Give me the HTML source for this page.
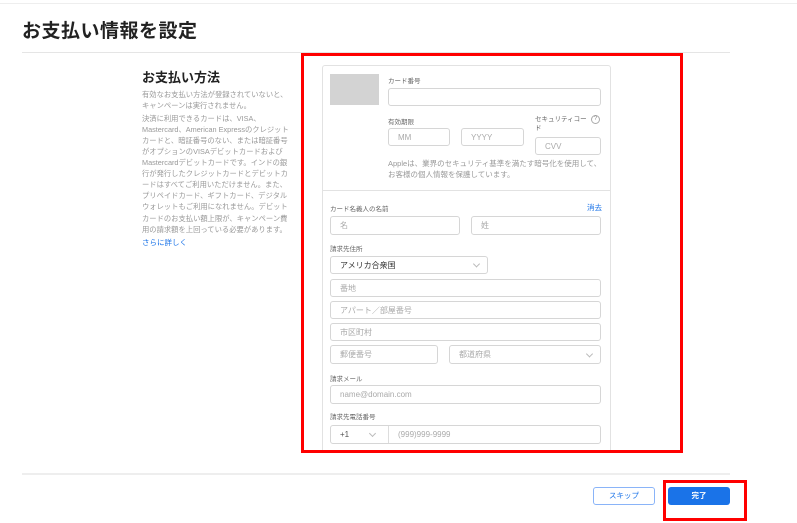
<!DOCTYPE html>
<html><head><meta charset="utf-8"><style>
*{margin:0;padding:0;box-sizing:border-box}
body{width:797px;height:523px;background:#fff;position:relative;overflow:hidden;font-family:"Liberation Sans","Noto Sans CJK JP",sans-serif;color:#333}
.a{position:absolute}
.lbl{position:absolute;font-size:6.5px;color:#666}
.in{position:absolute;border:1px solid #d6d6d6;border-radius:3px;font-size:8px;color:#aaa;padding-left:9px;display:flex;align-items:center;background:#fff}
.chev{position:absolute;right:8px;top:50%;width:5px;height:5px;border-right:1px solid #bbb;border-bottom:1px solid #bbb;transform:translateY(-70%) rotate(45deg)}
.t{white-space:nowrap}
</style></head><body>
<div class="a" style="left:0;top:3px;width:797px;height:1px;background:#eee"></div>
<div class="a" style="left:22px;top:16px;font-size:19px;font-weight:bold;color:#222;letter-spacing:0.5px">お支払い情報を設定</div>
<div class="a" style="left:22px;top:52px;width:708px;height:1px;background:#e5e5e5"></div>

<div class="a" style="left:142px;top:67px;font-size:13px;font-weight:bold;color:#222">お支払い方法</div>
<div class="a t" style="left:142px;top:89px;font-size:7.3px;line-height:11.1px;color:#999">有効なお支払い方法が登録されていないと、<br>キャンペーンは実行されません。<div style="height:1.5px"></div>決済に利用できるカードは、VISA、<br>Mastercard、American Expressのクレジット<br>カードと、暗証番号のない、または暗証番号<br>がオプションのVISAデビットカードおよび<br>Mastercardデビットカードです。インドの銀<br>行が発行したクレジットカードとデビットカ<br>ードはすべてご利用いただけません。また、<br>プリペイドカード、ギフトカード、デジタル<br>ウォレットもご利用になれません。デビット<br>カードのお支払い額上限が、キャンペーン費<br>用の請求額を上回っている必要があります。</div>
<div class="a" style="left:142px;top:237px;font-size:7.5px;color:#1a73e8">さらに詳しく</div>

<div class="a" style="left:322px;top:65px;width:289px;height:386px;border:1px solid #e2e2e2;border-bottom:none;border-radius:3px 3px 0 0"></div>
<div class="a" style="left:301px;top:53px;width:382px;height:400px;border:3px solid #f00"></div>
<div class="a" style="left:322px;top:190px;width:289px;height:1px;background:#e2e2e2"></div>
<div class="a" style="left:330px;top:74px;width:49px;height:31px;background:#d3d3d3"></div>
<div class="lbl" style="left:388px;top:75px">カード番号</div>
<div class="in" style="left:388px;top:88px;width:213px;height:18px"></div>
<div class="lbl" style="left:388px;top:116px">有効期限</div>
<div class="in" style="left:388px;top:128px;width:62px;height:18px">MM</div>
<div class="in" style="left:461px;top:128px;width:63px;height:18px">YYYY</div>
<div class="lbl" style="left:535px;top:115px;line-height:9px;width:55px">セキュリティコード</div>
<div class="a" style="left:591px;top:115px;width:9px;height:9px;border:1px solid #aaa;border-radius:50%;font-size:6px;color:#888;text-align:center;line-height:7px">?</div>
<div class="in" style="left:535px;top:137px;width:66px;height:18px">CVV</div>
<div class="a t" style="left:388px;top:158px;font-size:7.5px;line-height:11px;color:#999">Appleは、業界のセキュリティ基準を満たす暗号化を使用して、<br>お客様の個人情報を保護しています。</div>

<div class="lbl" style="left:330px;top:203px">カード名義人の名前</div>
<div class="a" style="left:587px;top:202px;font-size:7.5px;color:#1a73e8">消去</div>
<div class="in" style="left:330px;top:216px;width:130px;height:19px">名</div>
<div class="in" style="left:471px;top:216px;width:130px;height:19px">姓</div>
<div class="lbl" style="left:330px;top:243px">請求先住所</div>
<div class="in" style="left:330px;top:256px;width:158px;height:18px;color:#333">アメリカ合衆国<span class="chev"></span></div>
<div class="in" style="left:330px;top:279px;width:271px;height:18px">番地</div>
<div class="in" style="left:330px;top:301px;width:271px;height:18px">アパート／部屋番号</div>
<div class="in" style="left:330px;top:323px;width:271px;height:18px">市区町村</div>
<div class="in" style="left:330px;top:345px;width:108px;height:19px">郵便番号</div>
<div class="in" style="left:449px;top:345px;width:152px;height:19px">都道府県<span class="chev"></span></div>
<div class="lbl" style="left:330px;top:373px">請求メール</div>
<div class="in" style="left:330px;top:385px;width:271px;height:19px">name@domain.com</div>
<div class="lbl" style="left:330px;top:411px">請求先電話番号</div>
<div class="in" style="left:330px;top:425px;width:271px;height:19px;color:#555">+1<span style="position:absolute;left:39px;top:5px;width:5px;height:5px;border-right:1px solid #bbb;border-bottom:1px solid #bbb;transform:rotate(45deg)"></span><span style="position:absolute;left:57px;top:0;bottom:0;width:1px;background:#ddd"></span><span style="position:absolute;left:67px;color:#aaa">(999)999-9999</span></div>

<div class="a" style="left:22px;top:473px;width:708px;height:2px;background:#eee"></div>
<div class="a" style="left:593px;top:487px;width:62px;height:18px;border:1px solid #8ab4f8;border-radius:3px;font-size:7.5px;color:#1a73e8;text-align:center;line-height:16px">スキップ</div>
<div class="a" style="left:663px;top:480px;width:84px;height:41px;border:3px solid #f00"></div>
<div class="a" style="left:668px;top:487px;width:62px;height:18px;background:#1a73e8;border-radius:3px;font-size:7.5px;color:#fff;text-align:center;line-height:18px;font-weight:bold">完了</div>
</body></html>
